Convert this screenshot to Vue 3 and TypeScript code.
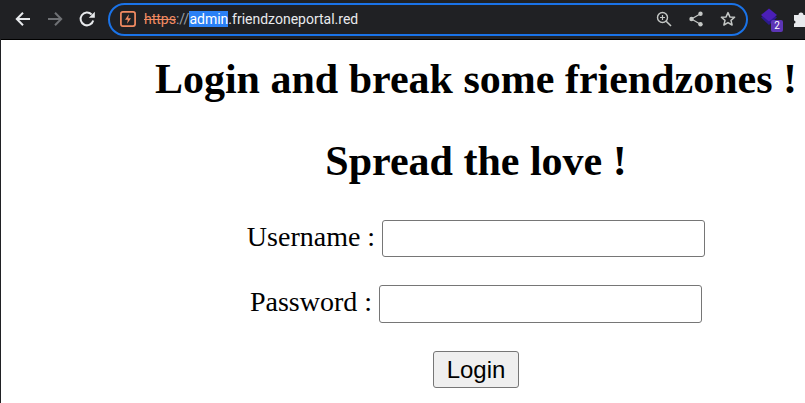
<script setup lang="ts">
const rows = ['Username', 'Password']
</script>

<template>
  <div class="window">
    <header class="toolbar">
      <svg class="nav" width="18" height="18" viewBox="0 0 18 18"><path d="M16 9H3.500M9 2.800 2.800 9 9 15.200" fill="none" stroke="#e8eaed" stroke-width="2"/></svg>
      <svg class="nav" width="18" height="18" viewBox="0 0 18 18"><path d="M2 9h12.500M9 2.800 15.200 9 9 15.200" fill="none" stroke="#6f7175" stroke-width="2"/></svg>
      <svg class="nav" width="18" height="18" viewBox="0 0 18 18"><path d="M15.200 10.500A6.400 6.400 0 1 1 13.600 4.500" fill="none" stroke="#e8eaed" stroke-width="2"/><path d="M10.800 7.800h6V1.800z" fill="#e8eaed"/></svg>
      <div class="omnibox">
        <svg width="16" height="16" viewBox="0 0 16 16"><rect x=".9" y=".9" width="14.200" height="14.200" rx="2" fill="none" stroke="#f28b62" stroke-width="1.700"/><path d="M8.900 3.200 5 8.800h2.800l-.7 4 3.900-5.600H8.200z" fill="#f28b62"/></svg>
        <div class="url"><s class="scheme">https</s><span class="sep">://</span><span class="sel">admin</span>.friendzoneportal.red</div>
        <svg class="action" width="16" height="16" viewBox="0 0 16 16"><circle cx="6.500" cy="6.500" r="5" fill="none" stroke="#c4c7c5" stroke-width="1.400"/><path d="M10.200 10.200 15 15" stroke="#c4c7c5" stroke-width="1.600"/><path d="M4 6.500h5M6.500 4v5" stroke="#c4c7c5" stroke-width="1.200"/></svg>
        <svg class="action" width="16" height="16" viewBox="0 0 16 16"><path d="M12.500 2.800 3.500 8l9 5.200" fill="none" stroke="#c4c7c5" stroke-width="1.200"/><circle cx="12.500" cy="2.800" r="2.200" fill="#c4c7c5"/><circle cx="3.500" cy="8" r="2.200" fill="#c4c7c5"/><circle cx="12.500" cy="13.200" r="2.200" fill="#c4c7c5"/></svg>
        <svg class="action" width="16" height="16" viewBox="0 0 16 16"><path d="m8 1.600 1.900 4.300 4.700.4-3.600 3.100 1.100 4.600L8 11.600 3.900 14 5 9.400 1.400 6.300l4.700-.4z" fill="none" stroke="#c4c7c5" stroke-width="1.500" stroke-linejoin="round"/></svg>
      </div>
      <div class="extension">
        <svg width="22" height="22" viewBox="0 0 22 22"><path d="M0 9.500 8 17l8-7.500-8-6z" fill="#2b1a8f"/><path d="M0 7 8 .5 16 7l-8 6.500z" fill="#4b1fb8"/></svg>
        <span class="badge">2</span>
      </div>
      <svg class="puzzle" width="18" height="18" viewBox="0 0 18 18"><path d="M0 5h4.500a2.500 2.500 0 1 1 5 0H14v4a2 2 0 1 1 0 4v4H0v-3.500a1.500 1.500 0 1 0 0-3z" fill="#e8eaed"/></svg>
    </header>

    <main class="page">
      <h1>Login and break some friendzones !</h1>
      <h1>Spread the love !</h1>
      <form class="form" @submit.prevent>
        <div v-for="row in rows" :key="row" class="row">
          <label class="label" :for="row">{{ row }} :</label>
          <input :id="row" class="field" :type="row === 'Password' ? 'password' : 'text'" />
        </div>
        <button class="submit" type="submit">Login</button>
      </form>
    </main>
  </div>
</template>

<style>
html, body { margin: 0; overflow: hidden; background: #fff; }
</style>

<style scoped>
.window {
  width: 805px;
  height: 403px;
  overflow: hidden;
  box-sizing: border-box;
  border-left: 1px solid #202124;
  font-family: "Liberation Serif", serif;
  color: #000;
}
.toolbar {
  height: 40px;
  box-sizing: border-box;
  display: flex;
  align-items: center;
  background: #202124;
  padding: 0 0 1px 13px;
  border-bottom: 1px solid #000;
}
.nav { margin-right: 14px; flex: none; }
.nav:nth-child(3) { margin-right: 12px; }
.omnibox {
  width: 640px;
  height: 33px;
  flex: none;
  box-sizing: border-box;
  border: 2px solid #1a73e8;
  border-radius: 17px;
  display: flex;
  align-items: center;
  padding: 0 10px;
}
.url {
  flex: 1;
  margin-left: 8px;
  font: 14px "Roboto", "Noto Sans", sans-serif;
  color: #e8eaed;
  white-space: nowrap;
}
.scheme { color: #f28b62; }
.sep { color: #9aa0a6; }
.sel { background: #2a80f5; color: #fff; }
.action { margin-left: 16px; flex: none; }
.extension { position: relative; width: 22px; height: 22px; margin-left: 13px; flex: none; }
.badge {
  position: absolute;
  right: 0;
  top: 12px;
  width: 12px;
  height: 12px;
  border-radius: 2px;
  background: #5c35b5;
  color: #fff;
  font: 10px/12px "Roboto", sans-serif;
  text-align: center;
}
.puzzle { margin-left: 11px; flex: none; }
.page {
  padding-left: 146px;
  text-align: center;
}
h1 {
  margin: 0 0 4px;
  font-size: 42px;
  line-height: 78px;
  font-weight: bold;
  white-space: nowrap;
}
.form { display: flex; flex-direction: column; align-items: center; margin-top: 20px; }
.row {
  display: flex;
  align-items: flex-start;
  gap: 7px;
  margin-bottom: 28px;
  font-size: 28px;
  line-height: 33px;
}
.field {
  width: 323px;
  height: 37px;
  box-sizing: border-box;
  border: 1px solid #767676;
  border-radius: 3px;
  background: #fff;
  padding: 0;
}
.row:nth-child(2) .field { height: 38px; }
.submit {
  width: 86px;
  height: 37px;
  box-sizing: border-box;
  border: 1px solid #767676;
  border-radius: 3px;
  background: #efefef;
  color: #000;
  font: 24px "Liberation Sans", sans-serif;
  padding: 0;
}
</style>
